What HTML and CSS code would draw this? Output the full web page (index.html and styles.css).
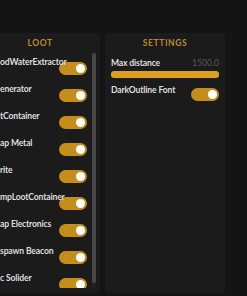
FILE: index.html
```html
<!DOCTYPE html>
<html lang="en">
<head>
  <meta charset="UTF-8" />
  <title>ESP menu</title>
  <link rel="stylesheet" href="styles.css">
</head>
<body>
  <div class="app">
    <section class="panel loot">
      <div class="panel-head">LOOT</div>
      <div class="panel-body">
        <div class="list">
          <div class="row"><span class="label">odWaterExtractor</span><span class="toggle"><i></i></span></div>
          <div class="row"><span class="label">enerator</span><span class="toggle"><i></i></span></div>
          <div class="row"><span class="label">tContainer</span><span class="toggle"><i></i></span></div>
          <div class="row"><span class="label">ap Metal</span><span class="toggle"><i></i></span></div>
          <div class="row"><span class="label">rite</span><span class="toggle"><i></i></span></div>
          <div class="row"><span class="label">mpLootContainer</span><span class="toggle"><i></i></span></div>
          <div class="row"><span class="label">ap Electronics</span><span class="toggle"><i></i></span></div>
          <div class="row"><span class="label">spawn Beacon</span><span class="toggle"><i></i></span></div>
          <div class="row"><span class="label">c Solider</span><span class="toggle"><i></i></span></div>
        </div>
        <div class="scroll"><div class="thumb"></div></div>
      </div>
    </section>

    <section class="panel settings">
      <div class="panel-head">SETTINGS</div>
      <div class="panel-body">
        <div class="field">
          <span class="label">Max distance</span>
          <span class="value">1500.0</span>
        </div>
        <div class="slider"></div>
        <div class="row">
          <span class="label">DarkOutline Font</span>
          <span class="toggle"><i></i></span>
        </div>
      </div>
    </section>
  </div>
</body>
</html>
```

FILE: styles.css
```css
* { box-sizing: border-box; margin: 0; padding: 0; }
html, body {
  width: 247px;
  height: 296px;
  overflow: hidden;
  background: #141414;
  font-family: Lato, "Open Sans", sans-serif;
  font-weight: 700;
  font-size: 8.6px;
  letter-spacing: -0.15px;
  color: #dedede;
}
.app {
  display: flex;
  gap: 5px;
  margin-left: -20px;
  padding-top: 33px;
  height: 296px;
}
.panel {
  width: 120px;
  height: 260px;
  background: #1b1b1b;
  border-radius: 4px;
  display: flex;
  flex-direction: column;
}
.panel-head {
  height: 19px;
  line-height: 21px;
  text-align: center;
  color: #b98b2f;
  font-size: 8.5px;
  letter-spacing: 0.6px;
}
.loot .panel-body {
  flex: 1;
  min-height: 0;
  display: flex;
  padding: 0 4px 5px 20px;
}
.list { flex: 1; min-width: 0; overflow: hidden; padding-top: 4px; }
.row { height: 27px; display: flex; align-items: flex-start; }
.label {
  flex: 1; min-width: 0;
  white-space: nowrap;
  line-height: 12px;
  position: relative; z-index: 1;
}
.toggle {
  flex-shrink: 0;
  width: 28px; height: 13px;
  margin-top: 6px;
  border-radius: 7px;
  background: #c58d1a;
  display: flex; justify-content: flex-end; align-items: center;
  padding-right: 2px;
}
.toggle i { width: 9px; height: 9px; border-radius: 50%; background: #fff; }
.scroll {
  width: 4px; margin-left: 5px;
  background: #222;
  border-radius: 2px;
}
.thumb { height: 230px; margin-top: 1px; background: #474747; border-radius: 2px; }

.settings .panel-body { padding: 5px 6px 0 6px; }
.field { display: flex; line-height: 12px; }
.value { font-weight: 400; color: #585858; letter-spacing: 0; }
.slider {
  height: 7px; margin-top: 2px;
  background: #dca020;
  border-radius: 3px;
}
.settings .row { margin-top: 6px; }
.settings .toggle { margin-top: 4px; }
```
